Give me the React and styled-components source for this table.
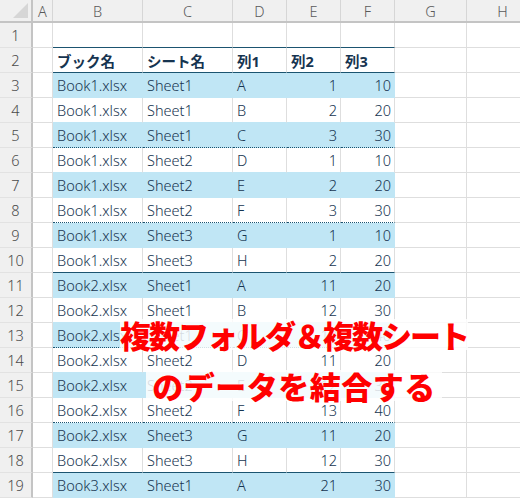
import React from 'react';
import styled, { createGlobalStyle } from 'styled-components';

const GlobalStyle = createGlobalStyle`
  html, body {
    margin: 0;
    padding: 0;
    background: #fff;
    overflow: hidden;
  }
`;

const COLS = '33px 20px 90px 90px 54px 54px 54px 72px 72px';
const INK = '#163450';
const LINE = '#1b5470';
const BAND = '#c0e6f5';
const GRID = '#dedede';
const HEAD = '#f0f0f0';
const HEAD_EDGE = '#c4c4c4';

const rows = [
  ['Book1.xlsx', 'Sheet1', 'A', 1, 10],
  ['Book1.xlsx', 'Sheet1', 'B', 2, 20],
  ['Book1.xlsx', 'Sheet1', 'C', 3, 30, 'dot'],
  ['Book1.xlsx', 'Sheet2', 'D', 1, 10],
  ['Book1.xlsx', 'Sheet2', 'E', 2, 20],
  ['Book1.xlsx', 'Sheet2', 'F', 3, 30, 'dot'],
  ['Book1.xlsx', 'Sheet3', 'G', 1, 10],
  ['Book1.xlsx', 'Sheet3', 'H', 2, 20, 'solid'],
  ['Book2.xlsx', 'Sheet1', 'A', 11, 20],
  ['Book2.xlsx', 'Sheet1', 'B', 12, 30],
  ['Book2.xlsx', 'Sheet1', 'C', 13, 40, 'dot'],
  ['Book2.xlsx', 'Sheet2', 'D', 11, 20],
  ['Book2.xlsx', 'Sheet2', 'E', 12, 30],
  ['Book2.xlsx', 'Sheet2', 'F', 13, 40, 'dot'],
  ['Book2.xlsx', 'Sheet3', 'G', 11, 20],
  ['Book2.xlsx', 'Sheet3', 'H', 12, 30, 'solid'],
  ['Book3.xlsx', 'Sheet1', 'A', 21, 30],
];

const Sheet = styled.div`
  position: relative;
  width: 520px;
  height: 500px;
  overflow: hidden;
  font-family: "Noto Sans", "Noto Sans CJK JP", sans-serif;
  color: ${INK};
`;

const ColumnBar = styled.div`
  display: grid;
  grid-template-columns: ${COLS};
  height: 23px;
  box-sizing: border-box;
  background: ${HEAD};
  border-bottom: 2px solid ${HEAD_EDGE};
`;

const Corner = styled.div`
  position: relative;
  border-right: 2px solid ${HEAD_EDGE};

  &::after {
    content: '';
    position: absolute;
    right: 3px;
    bottom: 3px;
    border-style: solid;
    border-width: 0 0 15px 15px;
    border-color: transparent transparent #d6d6d6 transparent;
  }
`;

const ColumnLetter = styled.div`
  display: flex;
  align-items: center;
  justify-content: center;
  border-right: 1px solid #d6d6d6;
  color: #5a5a5a;
  font-size: 14.5px;
  font-weight: 300;
`;

const Row = styled.div`
  display: grid;
  grid-template-columns: ${COLS};
  height: 25px;
`;

const RowNumber = styled.div`
  display: flex;
  align-items: center;
  justify-content: center;
  box-sizing: border-box;
  background: ${HEAD};
  border-right: 2px solid ${HEAD_EDGE};
  border-bottom: 1px solid #e2e2e2;
  color: #4a4a4a;
  font-size: 14.5px;
  font-weight: 300;
`;

const Cell = styled.div`
  display: flex;
  align-items: center;
  justify-content: ${(p) => (p.$right ? 'flex-end' : 'flex-start')};
  box-sizing: border-box;
  padding: 0 3px 0 4px;
  font-size: 14.5px;
  font-weight: ${(p) => (p.$bold ? 700 : 300)};
  white-space: nowrap;
  overflow: hidden;
  background: ${(p) => (p.$band ? BAND : 'transparent')};
  border-right: 1px solid ${(p) => (p.$band ? BAND : GRID)};
  border-bottom: 1px ${(p) => (p.$edge === 'dot' ? 'dotted' : 'solid')}
    ${(p) => (p.$edge ? LINE : p.$hide ? BAND : GRID)};
`;

const Caption = styled.div`
  position: absolute;
  top: 319px;
  left: 120px;
  width: 348px;
  display: flex;
  flex-direction: column;
  align-items: center;
  gap: 20px;
  pointer-events: none;
`;

const CaptionLine = styled.div`
  padding: 0 ${(p) => (p.$tight ? '0' : '6px')};
  background: rgba(255, 255, 255, 0.82);
  color: #ff0000;
  font-family: "Noto Sans CJK JP", sans-serif;
  font-weight: 900;
  font-size: 31px;
  line-height: 31px;
  letter-spacing: ${(p) => (p.$tight ? '-2px' : '0.5px')};
  white-space: nowrap;
  text-shadow: 0 0 2px #fff;
`;

const letters = ['A', 'B', 'C', 'D', 'E', 'F', 'G', 'H'];

const EmptyRest = ({ n }) =>
  Array.from({ length: n }, (_, i) => <Cell key={`r${i}`} />);

const App = () => {
  return (
    <>
      <GlobalStyle />
      <Sheet>
        <ColumnBar>
          <Corner />
          {letters.map((l) => (
            <ColumnLetter key={l}>{l}</ColumnLetter>
          ))}
        </ColumnBar>

        <Row>
          <RowNumber>1</RowNumber>
          <Cell />
          {[0, 1, 2, 3, 4].map((i) => (
            <Cell key={i} $edge="solid" />
          ))}
          <EmptyRest n={2} />
        </Row>

        <Row>
          <RowNumber>2</RowNumber>
          <Cell />
          {['ブック名', 'シート名', '列1', '列2', '列3'].map((h) => (
            <Cell key={h} $bold $edge="solid">
              {h}
            </Cell>
          ))}
          <EmptyRest n={2} />
        </Row>

        {rows.map(([book, sheet, c1, c2, c3, edge], i) => {
          const band = i % 2 === 0;
          const values = [
            [book, false],
            [sheet, false],
            [c1, false],
            [c2, true],
            [c3, true],
          ];
          return (
            <Row key={i}>
              <RowNumber>{i + 3}</RowNumber>
              <Cell />
              {values.map(([v, right], j) => (
                <Cell key={j} $band={band} $right={right} $edge={edge} $hide>
                  {v}
                </Cell>
              ))}
              <EmptyRest n={2} />
            </Row>
          );
        })}

        <Caption>
          <CaptionLine $tight>複数フォルダ＆複数シート</CaptionLine>
          <CaptionLine>のデータを結合する</CaptionLine>
        </Caption>
      </Sheet>
    </>
  );
};

export default App;
